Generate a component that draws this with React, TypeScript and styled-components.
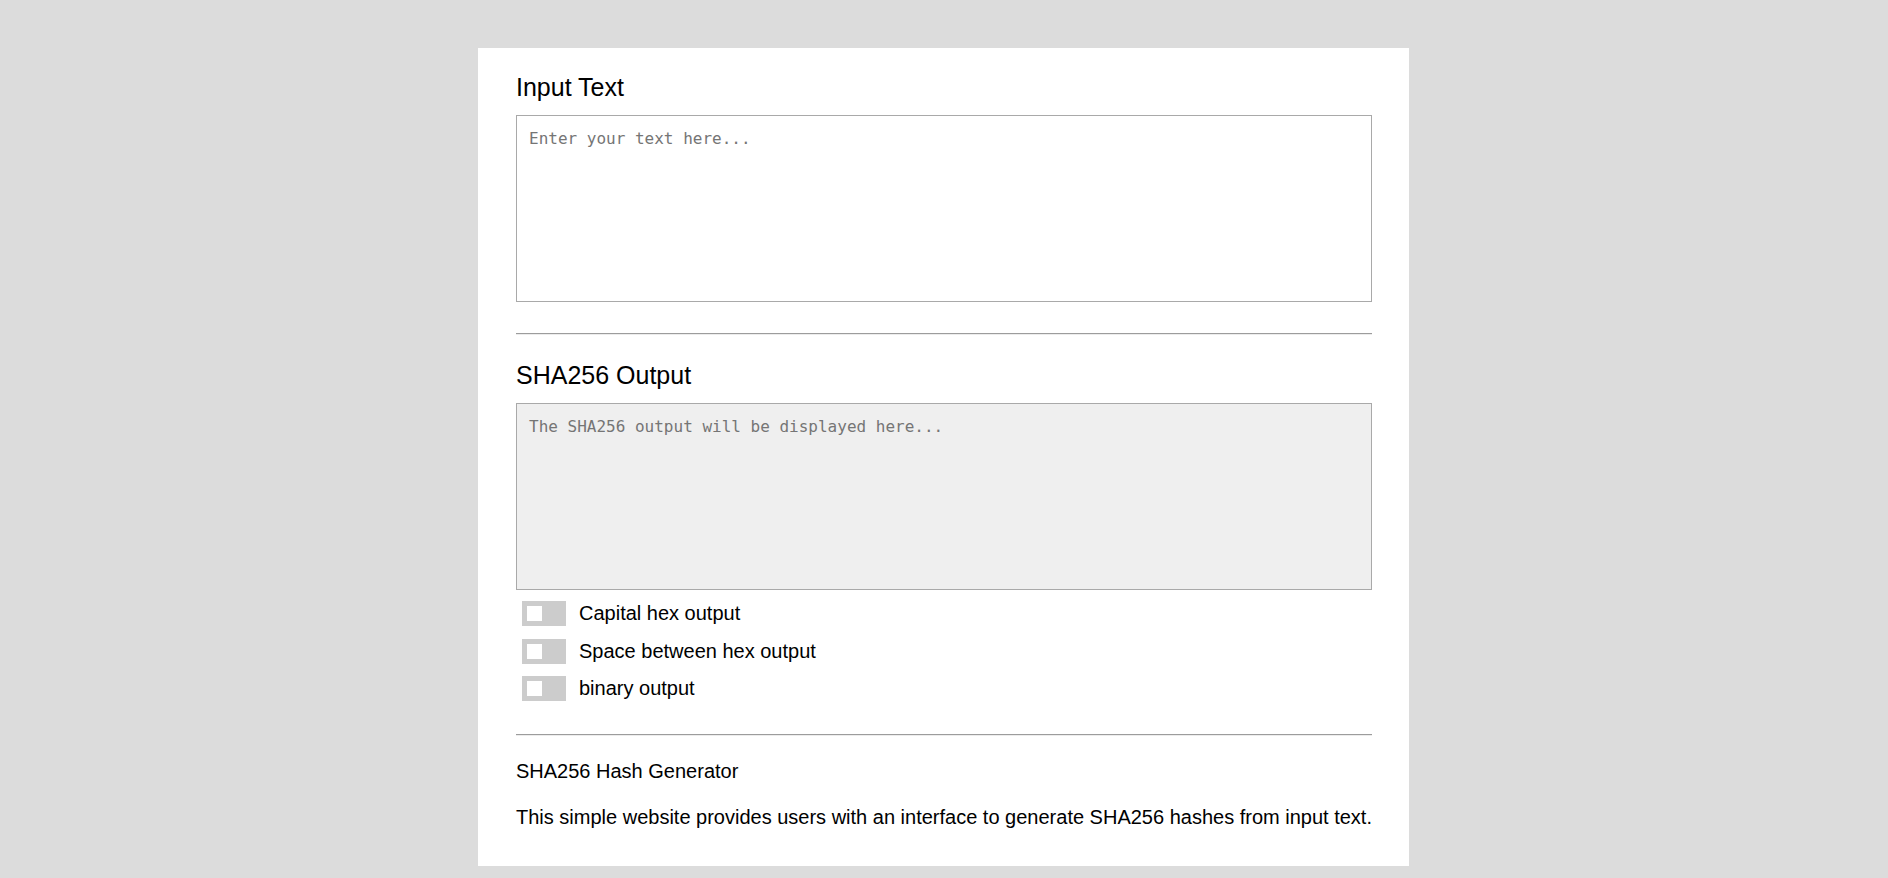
import { useState } from 'react';
import styled, { createGlobalStyle } from 'styled-components';

const GlobalStyle = createGlobalStyle`
  html, body {
    margin: 0;
    padding: 0;
    background: #dcdcdc;
  }
  body {
    font-family: 'Liberation Sans', Arial, sans-serif;
    color: #000;
  }
`;

const Card = styled.main`
  box-sizing: border-box;
  width: 931px;
  margin: 48px 0 12px calc(50% - 466px);
  padding: 25px 37px 37px 38px;
  background: #fff;
`;

const Heading = styled.h2`
  margin: 0 0 14px;
  font-size: 25px;
  line-height: 28px;
  font-weight: 400;
`;

const TextBox = styled.textarea<{ $readOnly?: boolean }>`
  display: block;
  box-sizing: border-box;
  width: 100%;
  height: 187px;
  margin: 0;
  padding: 13px 12px 12px;
  border: 1px solid #a9a9a9;
  border-radius: 0;
  resize: none;
  outline: none;
  background: ${(p) => (p.$readOnly ? '#efefef' : '#fff')};
  font-family: 'DejaVu Sans Mono', monospace;
  font-size: 16px;
  color: #222;

  &::placeholder {
    color: #757575;
  }
`;

const Divider = styled.hr<{ $top: number; $bottom: number }>`
  margin: ${(p) => p.$top}px 0 ${(p) => p.$bottom}px;
  height: 0;
  border: 0;
  border-top: 1px solid #9c9c9c;
  border-bottom: 1px solid #ececec;
`;

const Options = styled.div`
  display: flex;
  flex-direction: column;
  gap: 12.5px;
  margin-top: 11px;
`;

const OptionRow = styled.label`
  display: flex;
  align-items: center;
  gap: 13px;
  height: 25px;
  padding-left: 6px;
  font-size: 20px;
  cursor: pointer;
`;

const Switch = styled.span<{ $on: boolean }>`
  position: relative;
  flex: none;
  width: 44px;
  height: 25px;
  background: ${(p) => (p.$on ? '#4a90d9' : '#ccc')};

  &::after {
    content: '';
    position: absolute;
    top: 5px;
    left: ${(p) => (p.$on ? '24px' : '5px')};
    width: 15px;
    height: 15px;
    background: #fff;
  }
`;

const HiddenCheck = styled.input`
  display: none;
`;

const AboutTitle = styled.p`
  margin: 24px 0 0;
  font-size: 20px;
  line-height: 23px;
`;

const AboutText = styled.p`
  margin: 23px 0 0;
  font-size: 20px;
  line-height: 23px;
  white-space: nowrap;
`;

const options = [
  { id: 'capital', label: 'Capital hex output' },
  { id: 'space', label: 'Space between hex output' },
  { id: 'binary', label: 'binary output' },
];

export default function App() {
  const [text, setText] = useState('');
  const [flags, setFlags] = useState<Record<string, boolean>>({});

  return (
    <>
      <GlobalStyle />
      <Card>
        <Heading>Input Text</Heading>
        <TextBox
          value={text}
          onChange={(e) => setText(e.target.value)}
          placeholder='Enter your text here...'
        />
        <Divider $top={31} $bottom={26} />
        <Heading>SHA256 Output</Heading>
        <TextBox $readOnly readOnly placeholder='The SHA256 output will be displayed here...' />
        <Options>
          {options.map((opt) => (
            <OptionRow key={opt.id}>
              <HiddenCheck
                type='checkbox'
                checked={!!flags[opt.id]}
                onChange={() => setFlags({ ...flags, [opt.id]: !flags[opt.id] })}
              />
              <Switch $on={!!flags[opt.id]} />
              {opt.label}
            </OptionRow>
          ))}
        </Options>
        <Divider $top={33} $bottom={0} />
        <AboutTitle>SHA256 Hash Generator</AboutTitle>
        <AboutText>
          This simple website provides users with an interface to generate SHA256 hashes from input text.
        </AboutText>
      </Card>
    </>
  );
}
